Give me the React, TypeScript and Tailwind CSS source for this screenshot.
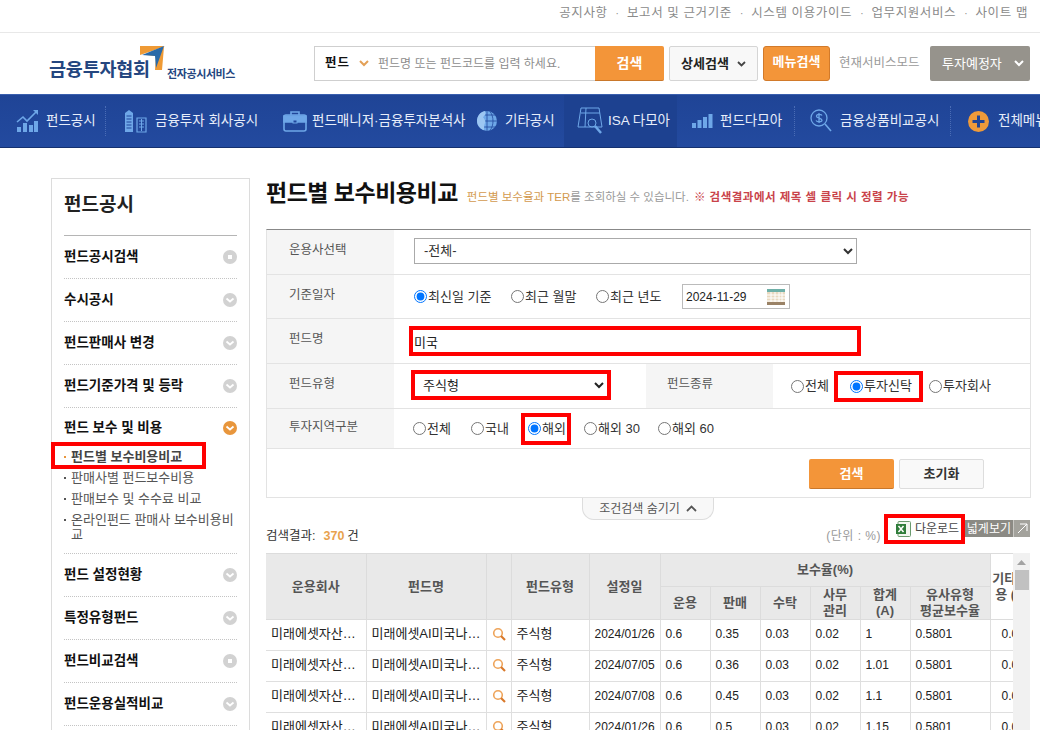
import { ReactNode } from 'react'

const topLinks = ['공지사항', '보고서 및 근거기준', '시스템 이용가이드', '업무지원서비스', '사이트 맵']

const sideTop = [
  { label: '펀드공시검색', icon: 'dot' },
  { label: '수시공시', icon: 'down' },
  { label: '펀드판매사 변경', icon: 'down' },
  { label: '펀드기준가격 및 등락', icon: 'down' },
]

const sideBottom = [
  { label: '펀드 설정현황', icon: 'down' },
  { label: '특정유형펀드', icon: 'down' },
  { label: '펀드비교검색', icon: 'dot' },
  { label: '펀드운용실적비교', icon: 'down' },
]

const rows = [
  ['2024/01/26', '0.35', '1', '0.5801'],
  ['2024/07/05', '0.36', '1.01', '0.5801'],
  ['2024/07/08', '0.45', '1.1', '0.5801'],
  ['2024/01/26', '0.5', '1.15', '0.5801'],
]

function SideIcon({ type, active }: { type: string; active?: boolean }) {
  return (
    <svg width="14" height="14" viewBox="0 0 14 14">
      <circle cx="7" cy="7" r="7" fill={active ? '#e8963c' : '#d2d2d2'} />
      {type === 'dot' ? (
        <rect x="5" y="5" width="4" height="4" fill="#fff" />
      ) : (
        <path d="M3.5 5.5 7 8.5l3.5-3" fill="none" stroke="#fff" strokeWidth="1.8" />
      )}
    </svg>
  )
}

function SideRow({ label, icon }: { label: string; icon: string }) {
  return (
    <div className="h-[43px] flex items-center justify-between border-b border-dotted border-[#c4c4c4]">
      <span className="text-[13.5px] font-bold text-[#111]">{label}</span>
      <SideIcon type={icon} />
    </div>
  )
}

function SubItem({ children, active }: { children: ReactNode; active?: boolean }) {
  return (
    <div className="relative pl-[7px] text-[13px] leading-[15px] text-[#555]">
      <span
        className={`absolute left-0 top-[7px] w-[2px] h-[2px] ${active ? 'bg-[#e8963c]' : 'bg-[#555]'}`}
      />
      {children}
    </div>
  )
}

function Radio({
  label,
  checked,
  name,
  className = '',
}: {
  label: string
  checked?: boolean
  name: string
  className?: string
}) {
  return (
    <label className={`flex items-center text-[13px] text-[#333] ${className}`}>
      <input type="radio" name={name} defaultChecked={checked} className="m-0 mr-px w-[13px] h-[13px]" />
      {label}
    </label>
  )
}

function FormRow({ label, height, children }: { label: string; height: string; children: ReactNode }) {
  return (
    <div className={`flex border-b border-[#e3e3e3] ${height}`}>
      <div className="w-[127px] shrink-0 bg-[#f5f5f5] pl-[22px] flex items-center pb-[3px] text-[12.5px] text-[#555]">
        {label}
      </div>
      {children}
    </div>
  )
}

function NavSep() {
  return <div className="w-px h-[30px] shrink-0 border-l border-dotted border-[#4a6cb5]" />
}

function ChartIcon() {
  return (
    <svg width="24" height="24" viewBox="0 0 24 24" fill="#6ea7e8">
      <rect x="1" y="18" width="4" height="5" />
      <rect x="7" y="14" width="4" height="9" />
      <rect x="13" y="16" width="4" height="7" />
      <rect x="18" y="12" width="4" height="11" />
      <path d="M1 13l6-5 4 4 9-9" fill="none" stroke="#6ea7e8" strokeWidth="1.6" />
      <path d="M17 1h5v5z" />
    </svg>
  )
}

function BuildingIcon() {
  return (
    <svg width="23" height="24" viewBox="0 0 23 24" fill="#6ea7e8">
      <path d="M1 23V4l4-3 4 3v19H1z" />
      <path d="M2.5 7h5M2.5 10h5M2.5 13h5M2.5 16h5M2.5 19h5" stroke="#21479c" strokeWidth="1" />
      <path d="M13 9h9v14h-9z" fill="none" stroke="#6ea7e8" strokeWidth="1.2" />
      <path d="M15 12h5M15 15h5M15 18h5M17.500 10v12" stroke="#6ea7e8" strokeWidth="1" />
    </svg>
  )
}

function CaseIcon() {
  return (
    <svg width="24" height="22" viewBox="0 0 24 22" fill="none" stroke="#6ea7e8" strokeWidth="1.6">
      <rect x="1" y="5" width="22" height="16" rx="2" />
      <path d="M8 5V2h8v3" />
      <path d="M1 6h22v6H1z" fill="#6ea7e8" />
      <rect x="10" y="10" width="4" height="3" fill="#21479c" strokeWidth="1" />
    </svg>
  )
}

function GlobeIcon() {
  return (
    <svg width="22" height="22" viewBox="0 0 22 22" fill="none">
      <circle cx="11" cy="11" r="10" fill="#6ea7e8" />
      <path d="M11 1v20M1 11h20M3 5h16M3 17h16M14 1.500c4 5 4 14 0 19" stroke="#21479c" strokeWidth="0.8" />
      <path d="M1 11c0-5 3-9 8-10 1 3 0 5-2 6 1 2 3 3 2 6-1 2-1 5-1 7-4-1-7-5-7-9z" fill="#9cc6f2" />
    </svg>
  )
}

function IsaIcon() {
  return (
    <svg width="26" height="30" viewBox="0 0 26 30" fill="none" stroke="#6ea7e8" strokeWidth="1">
      <path d="M4 2h18l3 19H1z" />
      <path d="M4 7h19M9 2l-1 19" />
      <circle cx="15" cy="17" r="4" />
      <path d="M18 20l6 7" strokeWidth="2.500" />
    </svg>
  )
}

function BarsIcon() {
  return (
    <svg width="21" height="14" viewBox="0 0 21 14" fill="#6ea7e8">
      <rect x="0" y="9" width="4" height="5" />
      <rect x="5.500" y="6" width="4" height="8" />
      <rect x="11" y="3" width="4" height="11" />
      <rect x="16.500" y="0" width="4" height="14" />
    </svg>
  )
}

function DollarIcon() {
  return (
    <svg width="22" height="24" viewBox="0 0 22 24" fill="none" stroke="#6ea7e8" strokeWidth="1.3">
      <circle cx="9" cy="9" r="8" />
      <path d="M15 15l6 7" strokeWidth="1.600" />
      <path d="M12 6.500C11 5 6.500 5 6.500 7.200S12 9 12 11.200 7 13 6 11.500M9 4v10" strokeWidth="1.300" />
    </svg>
  )
}

function ExcelIcon() {
  return (
    <svg width="15" height="16" viewBox="0 0 15 16">
      <rect x="2" y="0.500" width="12.500" height="15" rx="1" fill="#f2f7f0" stroke="#6a9a6e" />
      <rect x="0" y="3" width="10" height="10" fill="#2f7d3a" />
      <path d="M2.500 5 7.500 11M7.500 5 2.500 11" stroke="#fff" strokeWidth="1.500" />
    </svg>
  )
}

function SearchGlass() {
  return (
    <svg width="14" height="14" viewBox="0 0 14 14" fill="none" className="mx-auto">
      <circle cx="6" cy="6" r="4.300" stroke="#eea45a" strokeWidth="1.600" />
      <path d="M9 9l4 4" stroke="#d9782a" strokeWidth="2.200" />
    </svg>
  )
}

function Th({
  children,
  className = '',
  ...rest
}: {
  children?: ReactNode
  className?: string
  rowSpan?: number
  colSpan?: number
}) {
  return (
    <th
      {...rest}
      className={`bg-[#e9e9e9] border border-[#dcdcdc] text-[13px] leading-[16px] font-bold text-[#555] text-center p-0 ${className}`}
    >
      {children}
    </th>
  )
}

function Td({ children, className = '' }: { children: ReactNode; className?: string }) {
  return (
    <td className={`border border-[#dfdfdf] px-[5px] pb-[2px] text-[12px] text-[#222] whitespace-nowrap overflow-hidden ${className}`}>
      {children}
    </td>
  )
}

export default function App() {
  return (
    <div className="h-[730px] w-[1040px] overflow-hidden bg-white font-['Liberation_Sans','Noto_Sans_CJK_KR',sans-serif]">
      {/* 상단 링크 */}
      <div className="h-[33px] border-b border-[#e8e8e8] flex items-center justify-end pr-[12px] pb-[6px] text-[12.5px] text-[#8a8a8a]">
        {topLinks.map((t, i) => (
          <span key={t} className="flex items-center">
            {i > 0 && <span className="mx-[8px] text-[10px]">·</span>}
            <span className="tracking-[0.6px]">{t}</span>
          </span>
        ))}
      </div>

      {/* 헤더 */}
      <div className="h-[61px] flex items-start pt-[13px]">
        <div className="relative w-[314px] h-[36px] shrink-0">
          <svg width="25" height="25" viewBox="0 0 25 25" className="absolute left-[140px] top-0">
            <path d="M0 0h25L12 5 0 9z" fill="#ef9a35" />
            <path d="M6 9 24 1 22 24h-7l1-14z" fill="#ef9a35" />
            <path d="M2 9 24 0l-8 22-1-12z" fill="#2a6aa8" />
          </svg>
          <span className="absolute left-[49px] top-[11px] text-[18.500px] leading-[26px] font-bold text-[#24467f] whitespace-nowrap tracking-[-0.2px]">
            금융투자협회
          </span>
          <span className="absolute left-[167px] top-[20px] text-[11px] leading-[16px] font-bold text-[#24467f] whitespace-nowrap tracking-[-0.4px]">
            전자공시서비스
          </span>
        </div>
        <div className="w-[281px] h-[35px] shrink-0 border border-[#cfcfcf] border-r-0 flex items-center pl-[10px] text-[12.500px]">
          <span className="font-bold text-[#111] tracking-[1px]">펀드</span>
          <svg width="10" height="7" viewBox="0 0 10 7" className="ml-[9px]">
            <path d="M1 1l4 4 4-4" fill="none" stroke="#e3a057" strokeWidth="2" />
          </svg>
          <span className="ml-[9px] text-[#8d8d8d] text-[12px] whitespace-nowrap">펀드명 또는 펀드코드를 입력 하세요.</span>
        </div>
        <button className="w-[69px] h-[35px] shrink-0 bg-[#f39539] border-b border-[#c9772a] rounded-r-[2px] text-white text-[14px] font-bold">
          검색
        </button>
        <button className="ml-[5px] w-[89px] h-[35px] shrink-0 bg-[#f8f8f8] border border-[#d5d5d5] rounded-[2px] flex items-center justify-center gap-[8px] text-[13px] font-bold text-[#222]">
          상세검색
          <svg width="9" height="6" viewBox="0 0 9 6">
            <path d="M1 1l3.500 3.500L8 1" fill="none" stroke="#444" strokeWidth="1.800" />
          </svg>
        </button>
        <button className="ml-[5px] w-[67px] h-[35px] shrink-0 bg-[#f39539] border border-[#d27a2a] rounded-[3px] text-white text-[13px] font-bold pb-[3px]">
          메뉴검색
        </button>
        <span className="ml-[9px] w-[91px] shrink-0 h-[35px] flex items-center text-[12.500px] text-[#9a9a9a] whitespace-nowrap">
          현재서비스모드
        </span>
        <button className="w-[100px] h-[35px] shrink-0 bg-[#96938c] rounded-[2px] flex items-center pl-[12px] gap-[12px] text-[13px] text-white">
          투자예정자
          <svg width="10" height="7" viewBox="0 0 10 7">
            <path d="M1 1l4 4 4-4" fill="none" stroke="#fff" strokeWidth="2" />
          </svg>
        </button>
      </div>

      {/* 메인 메뉴 */}
      <nav className="h-[54px] bg-gradient-to-b from-[#1f4496] to-[#234a9f] border-t border-[#3a5fae] border-b border-b-[#15316f] flex items-center text-[13.500px] text-[#e8eefa] whitespace-nowrap overflow-hidden">
        <div className="w-[105px] shrink-0 pl-[16px] flex items-center gap-[6px]">
          <ChartIcon />펀드공시
        </div>
        <NavSep />
        <div className="w-[177px] shrink-0 pl-[18px] flex items-center gap-[8px]">
          <BuildingIcon />금융투자 회사공시
        </div>
        <div className="w-[193px] shrink-0 flex items-center gap-[5px]">
          <CaseIcon />펀드매니저·금융투자분석사
        </div>
        <div className="w-[88px] shrink-0 flex items-center gap-[7px]">
          <GlobeIcon />기타공시
        </div>
        <div className="w-[113px] h-full shrink-0 bg-[#1d4190] pl-[13px] flex items-center gap-[5px]">
          <IsaIcon />ISA 다모아
        </div>
        <div className="w-[117px] shrink-0 pl-[15px] flex items-center gap-[7px]">
          <BarsIcon />펀드다모아
        </div>
        <NavSep />
        <div className="w-[155px] shrink-0 pl-[15px] flex items-center gap-[8px]">
          <DollarIcon />금융상품비교공시
        </div>
        <NavSep />
        <div className="pl-[17px] flex items-center gap-[9px]">
          <svg width="21" height="21" viewBox="0 0 21 21">
            <circle cx="10.500" cy="10.500" r="10.500" fill="#ee9a3a" />
            <path d="M10.500 4.500v12M4.500 10.500h12" stroke="#1f4496" strokeWidth="3" />
          </svg>
          전체메뉴
        </div>
      </nav>

      <div className="flex pt-[30px] pl-[51px]">
        {/* 사이드 메뉴 */}
        <aside className="w-[199px] h-[560px] shrink-0 border border-[#dcdcdc] border-b-0 px-[12px]">
          <h2 className="h-[57px] border-b border-[#b5b5b5] text-[19px] leading-[52px] font-bold text-[#222]">펀드공시</h2>
          {sideTop.map((s) => (
            <SideRow key={s.label} {...s} />
          ))}
          <div className="border-b border-dotted border-[#c4c4c4] h-[146px]">
            <div className="h-[35px] pt-[5px] flex items-center justify-between">
              <span className="text-[13.500px] font-bold text-[#111]">펀드 보수 및 비용</span>
              <SideIcon type="down" active />
            </div>
            <div className="relative">
              <div className="absolute -left-[13px] -top-px w-[155px] h-[27px] border-[4px] border-[#f00]" />
              <div className="pt-[6px]">
                <SubItem active>
                  <b className="text-[#444]">펀드별 보수비용비교</b>
                </SubItem>
              </div>
              <div className="mt-[6px] flex flex-col gap-[6px]">
                <SubItem>판매사별 펀드보수비용</SubItem>
                <SubItem>판매보수 및 수수료 비교</SubItem>
                <SubItem>온라인펀드 판매사 보수비용비교</SubItem>
              </div>
            </div>
          </div>
          {sideBottom.map((s) => (
            <SideRow key={s.label} {...s} />
          ))}
        </aside>

        <main className="ml-[16px] w-[765px] shrink-0">
          <div className="h-[51px] flex items-baseline whitespace-nowrap">
            <h1 className="text-[23px] leading-[30px] font-bold text-[#111] tracking-[-0.5px]">펀드별 보수비용비교</h1>
            <span className="ml-[9px] text-[11.500px] text-[#d39a4e]">펀드별 보수율과 TER</span>
            <span className="text-[11.500px] text-[#999]">를 조회하실 수 있습니다.</span>
            <span className="ml-[5px] text-[11.500px] font-bold text-[#c9434a] tracking-[0.5px]">※ 검색결과에서 제목 셀 클릭 시 정렬 가능</span>
          </div>

          {/* 검색 폼 */}
          <div className="border border-[#e3e3e3] border-t-[#888]">
            <FormRow label="운용사선택" height="h-[45px]">
              <div className="pl-[20px] flex items-center pb-[3px]">
                <select className="w-[443px] h-[26px] border border-[#aaa] bg-white pl-[5px] text-[13px] text-[#333]">
                  <option>-전체-</option>
                </select>
              </div>
            </FormRow>
            <FormRow label="기준일자" height="h-[44px]">
              <div className="pl-[20px] flex items-center">
                <Radio name="date" label="최신일 기준" checked className="w-[97px]" />
                <Radio name="date" label="최근 월말" className="w-[85px]" />
                <Radio name="date" label="최근 년도" className="w-[86px]" />
                <div className="w-[108px] h-[25px] border border-[#bbb] flex items-center justify-between px-[3px] text-[12px] text-[#222]">
                  2024-11-29
                  <svg width="18" height="16" viewBox="0 0 18 16" className="mr-[1px]">
                    <rect width="18" height="16" fill="#e9d9c0" />
                    <rect width="18" height="3" fill="#6fb0a8" />
                    <path d="M0 6h18M0 9h18M0 12h18M4 3v13M8 3v13M12 3v13M15 3v13" stroke="#fff" strokeWidth="1" />
                    <rect y="13" width="18" height="3" fill="#9a8266" />
                  </svg>
                </div>
              </div>
            </FormRow>
            <FormRow label="펀드명" height="h-[45px]">
              <div className="pl-[15px] flex items-center">
                <input
                  defaultValue="미국"
                  className="w-[452px] h-[30px] border-[4px] border-[#f00] px-px text-[13px] text-[#222] outline-none"
                />
              </div>
            </FormRow>
            <FormRow label="펀드유형" height="h-[45px]">
              <div className="w-[252px] shrink-0 pl-[17px] flex items-center pb-[2px]">
                <select className="w-[200px] h-[30px] border-[4px] border-[#f00] bg-white pl-[4px] text-[13px] text-[#222]">
                  <option>주식형</option>
                </select>
              </div>
              <div className="w-[127px] shrink-0 bg-[#f5f5f5] pl-[21px] flex items-center pb-[3px] text-[12.500px] text-[#555]">
                펀드종류
              </div>
              <div className="pl-[18px] flex items-center">
                <Radio name="kind" label="전체" className="w-[43px]" />
                <div className="w-[89px] h-[31px] border-[4px] border-[#f00] flex items-center pl-[12px]">
                  <Radio name="kind" label="투자신탁" checked />
                </div>
                <Radio name="kind" label="투자회사" className="ml-[6px]" />
              </div>
            </FormRow>
            <FormRow label="투자지역구분" height="h-[40px]">
              <div className="pl-[19px] flex items-center">
                <Radio name="area" label="전체" className="w-[58px]" />
                <Radio name="area" label="국내" className="w-[50px]" />
                <div className="w-[50px] h-[32px] border-[4px] border-[#f00] flex items-center pl-[3px]">
                  <Radio name="area" label="해외" checked />
                </div>
                <Radio name="area" label="해외 30" className="ml-[13px] w-[74px]" />
                <Radio name="area" label="해외 60" />
              </div>
            </FormRow>
            <div className="h-[48px] flex justify-end items-start pt-[10px] pr-[46px] gap-[5px]">
              <button className="w-[85px] h-[30px] bg-[#f39539] border-b border-[#c9772a] rounded-[2px] text-white text-[13px] font-bold">
                검색
              </button>
              <button className="w-[85px] h-[30px] bg-[#f9f9f9] border border-[#ddd] rounded-[2px] text-[#333] text-[13px] font-bold">
                초기화
              </button>
            </div>
          </div>

          <div className="flex justify-center -ml-[1px]">
            <div className="w-[132px] h-[22px] bg-[#f8f8f8] border border-t-0 border-[#ddd] rounded-b-[12px] flex items-center justify-center gap-[6px] text-[12px] text-[#555]">
              조건검색 숨기기
              <svg width="11" height="7" viewBox="0 0 11 7">
                <path d="M1 6l4.500-4.500L10 6" fill="none" stroke="#555" strokeWidth="1.800" />
              </svg>
            </div>
          </div>

          {/* 결과 줄 */}
          <div className="relative h-[33px] flex items-start pt-[7px]">
            <span className="text-[12.500px] text-[#333]">검색결과:</span>
            <span className="ml-[8px] text-[12.500px] font-bold text-[#e8a24e]">370</span>
            <span className="ml-[3px] text-[12.500px] text-[#333]">건</span>
            <span className="ml-auto mr-[3px] text-[12px] text-[#999] tracking-[0.5px]">(단위 : %)</span>
            <div className="w-[81px] h-[30px] -mt-[13px] mr-0 border-[4px] border-[#f00] bg-white flex items-center pl-[8px] gap-[4px] text-[12px] text-[#444] whitespace-nowrap">
              <ExcelIcon />다운로드
            </div>
            <div className="h-[17px] -mt-[7px] w-[65px] mr-[1px] bg-[#8b8a84] flex items-center text-[12px] text-white whitespace-nowrap">
              <span className="w-[48px] overflow-hidden text-right pr-[2px]">넓게보기</span>
              <span className="w-[17px] h-full bg-[#a3a29c] flex items-center justify-center border-l border-white/40">
                <svg width="11" height="11" viewBox="0 0 11 11">
                  <path d="M1 10 10 1M3 1h7v7" fill="none" stroke="#fff" strokeWidth="1" />
                </svg>
              </span>
            </div>
          </div>

          {/* 결과 표 */}
          <div className="flex w-[764px]">
            <div className="w-[747px] overflow-hidden shrink-0">
              <table className="w-[768px] table-fixed border-collapse border-t border-t-[#888]">
                <colgroup>
                  <col className="w-[100px]" />
                  <col className="w-[120px]" />
                  <col className="w-[25px]" />
                  <col className="w-[78px]" />
                  <col className="w-[71px]" />
                  <col className="w-[50px]" />
                  <col className="w-[50px]" />
                  <col className="w-[50px]" />
                  <col className="w-[50px]" />
                  <col className="w-[50px]" />
                  <col className="w-[80px]" />
                  <col className="w-[44px]" />
                </colgroup>
                <thead>
                  <tr className="h-[33px]">
                    <Th rowSpan={2} className="border-l-0">운용회사</Th>
                    <Th rowSpan={2}>펀드명</Th>
                    <Th rowSpan={2} />
                    <Th rowSpan={2}>펀드유형</Th>
                    <Th rowSpan={2}>설정일</Th>
                    <Th colSpan={6}>보수율(%)</Th>
                    <Th rowSpan={2} className="bg-white">기타 비용 (B)</Th>
                  </tr>
                  <tr className="h-[33px]">
                    <Th>운용</Th>
                    <Th>판매</Th>
                    <Th>수탁</Th>
                    <Th>사무<br />관리</Th>
                    <Th>합계<br />(A)</Th>
                    <Th>유사유형<br />평균보수율</Th>
                  </tr>
                </thead>
                <tbody>
                  {rows.map((r, i) => (
                    <tr key={i} className="h-[31px]">
                      <Td className="border-l-0 text-[13px]">미래에셋자산…</Td>
                      <Td className="text-[13px]">미래에셋AI미국나…</Td>
                      <Td className="px-0"><SearchGlass /></Td>
                      <Td className="text-[13px]">주식형</Td>
                      <Td>{r[0]}</Td>
                      <Td>0.6</Td>
                      <Td>{r[1]}</Td>
                      <Td>0.03</Td>
                      <Td>0.02</Td>
                      <Td>{r[2]}</Td>
                      <Td>{r[3]}</Td>
                      <Td className="pl-[11px]">0.04</Td>
                    </tr>
                  ))}
                </tbody>
              </table>
            </div>
            <div className="w-[17px] h-[178px] shrink-0 bg-[#f1f1f1] flex flex-col items-center pt-[7px]">
              <svg width="9" height="5" viewBox="0 0 9 5">
                <path d="M4.500 0 9 5H0z" fill="#a3a3a3" />
              </svg>
              <div className="mt-[5px] w-[14px] h-[20px] bg-[#c1c1c1]" />
            </div>
          </div>
        </main>
      </div>
    </div>
  )
}
